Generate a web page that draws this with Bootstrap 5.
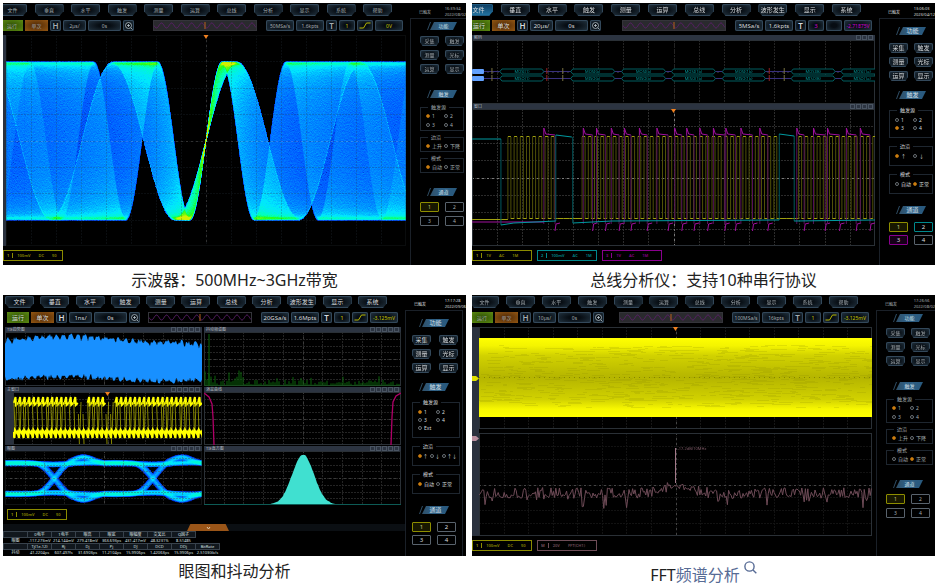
<!DOCTYPE html>
<html lang="zh-CN">
<head>
<meta charset="utf-8">
<meta name="viewport" content="width=device-width, initial-scale=1">
<title>示波器功能展示</title>
<link href="https://cdn.jsdelivr.net/npm/bootstrap@5.3.0/dist/css/bootstrap.min.css" rel="stylesheet">
<style>
body{font-family:"Noto Sans","Noto Sans CJK SC",sans-serif;background:#fff;color:#222}
.gallery{display:grid;grid-template-columns:1fr 1fr;column-gap:6px;padding:3px 2px 0 3px}
.gallery figure{min-width:0}
.gallery figcaption{font-size:16px;line-height:30px;text-align:center;color:#222}
.gallery figcaption a{color:#576b95;text-decoration:none}
.late{padding-top:4px}
.late svg{margin-bottom:18px}
.scope{background:#000;color:#a5adb2;font-size:5px;line-height:6px;height:262px;overflow:hidden;font-family:"Noto Sans","Noto Sans CJK SC",sans-serif}
.lower{height:261px}
.vivid{color:#d8dcdf;font-size:6px}
.scope button{font:inherit;color:inherit;border:0;padding:0;white-space:nowrap;overflow:hidden;flex:none;line-height:8px}
.deck{padding-top:1px;gap:4px}
.menus{height:12px;margin-right:18px;margin-left:var(--menu)}
.key{background:radial-gradient(ellipse at center,#070d13 25%,#1d2c38 80%);box-shadow:inset 0 0 0 1px #33485a;border-radius:2px}
.menus .key{width:29px;clip-path:polygon(0 0,100% 0,100% 60%,86% 100%,14% 100%,0 60%)}
.menus .key.on{background:linear-gradient(#0d3a5e,#2477a5);box-shadow:inset 0 0 0 1px #1f5a80}
.tools{height:11px;gap:2px;margin-left:var(--bar);margin-right:7px}
.tools .go{width:22px;background:radial-gradient(#2c4d05,#5d8c12)}
.tools .one{width:23px;background:radial-gradient(#4a2605,#945713)}
.tools .w1{width:11px}.tools .w2{width:23px}.tools .w3{width:33px}.tools .w4{width:28px}.tools .w5{width:16px}
.tools .hl{font-size:8px;font-weight:600}
.tools .lvl{font-size:5px}
.tools .key svg,.wavebox svg{display:block;width:100%;height:100%}
.wavebox{width:104px;margin:0 7px 0 auto;background:#2a2a2e;border:1px solid #34343a}
.framed .wavebox{background:#000}
.yel{color:#c8c800!important}.mag{color:#d000d0!important}
.strip{background:#2a313e;flex:none}
.plot{position:relative;overflow:hidden;background:#000;min-width:0}
.plot canvas,.plot>svg{position:absolute;left:0;top:0;width:100%;height:100%}
.bartitle{height:5px;background:#2c3441;font-size:4px;line-height:5px;padding:0 2px;color:#b5bac0}
.bartitle i{display:inline-block;width:5px;height:5px;border:1px solid #4a5563;margin-left:1px}
.tags{gap:5px;height:11px}
.tag{height:11px;line-height:9px;border:1px solid;min-width:60px;white-space:nowrap;font-size:4px}
.tag b{padding:0 3px;border-right:1px solid}
.tag span{padding:0 4px;font-weight:600}
.c1{color:#8b8b00}.c2{color:#00898d}.c3{color:#8a008e}.c4{color:#6f4d58}
.panelcol{width:56px;flex:none}
.framed .panelcol{width:61px}
[data-scope="fft"] .panelcol{width:59px}
.state{height:15px;font-size:4px;line-height:6px;padding:3px 0 0 9px;white-space:nowrap}
.side{border-left:1px solid #1a2028;border-top:1px solid #1a2028;flex:1;padding:3px 2px 0 9px}
.framed .side{padding-left:6px;margin-right:3px;border-right:1px solid #1a2028}
[data-scope="eye"] .pairs{column-gap:8px}
.chip{width:30px;height:8px;margin:0 auto 6px 7px;padding-left:3px;text-align:center;line-height:8px;color:#d5e0e8;background:linear-gradient(90deg,#2f4b60,#2f5f84 45%,#28587c);clip-path:polygon(0 100%,3px 0,4px 0,1px 100%,3px 100%,7px 0,100% 0,26px 100%)}
.pairs{display:grid;grid-template-columns:19px 19px;gap:4px 6px}
.pairs button{height:10px}
.pairs .key{clip-path:polygon(0 0,100% 0,100% 60%,86% 100%,14% 100%,0 60%)}
.g1{margin-bottom:16px}
.side fieldset{border:1px solid #1e262f;padding:1px 0 1px 5px;margin:0 0 3px}
.side legend{float:none;width:auto;font-size:5px;line-height:6px;padding:0 3px;margin:0 0 0 2px}
.opts{display:grid;grid-template-columns:18px 18px;grid-auto-rows:9px}
.opts.three{grid-template-columns:12px 12px 14px}
.opts label{display:flex;align-items:center;gap:2px;font-size:5px;white-space:nowrap}
.opts.three label{gap:1px}
.opts input{appearance:none;width:4px;height:4px;border:1px solid #6a7075;border-radius:50%;margin:0;flex:none}
.opts input:checked{background:#e08a10;border-color:#a3640c}
.fs3{margin-bottom:15px!important}
.chan button{background:#000;border:1px solid #59636d;border-radius:1px}
.chan .k1{border-color:#8e8e00;color:#c8c880;background:#181800}
.chan .k2{border-color:#00898d}.chan .k3{border-color:#8a008e;background:#160018}
.vivid .side{padding-top:8px}
.vivid .chip{margin-bottom:8px}
.vivid .g1{margin-bottom:10px}
.vivid fieldset{padding:3px 0 5px 5px;margin-bottom:5px}
.vivid .opts{grid-auto-rows:8px}
.vivid .chan{gap:3px 6px}
.vivid .fs3{margin-bottom:12px!important}
.fold{height:7px;background:#0b0f13}
.fold button{width:42px;height:7px;margin-left:184px;display:block;background:#9a5518;clip-path:polygon(8% 0,92% 0,100% 100%,0 100%)}
.fold svg{display:block;margin:auto}
.results{border-collapse:collapse;font-size:4px;line-height:5px;table-layout:fixed;color:#dfe2e4}
.results th,.results td{width:24px;height:6px;padding:0;text-align:center;font-weight:400;white-space:nowrap}
.results thead th,.results .hd th{background:#11171d;border:1px solid #38424c}
</style>
<script src="https://cdn.jsdelivr.net/npm/bootstrap@5.3.0/dist/js/bootstrap.bundle.min.js"></script>
</head>
<body>
<main class="gallery">
  <figure class="m-0">
    <div class="scope d-flex" data-scope="sweep"></div>
    <figcaption>示波器：500MHz~3GHz带宽</figcaption>
  </figure>
  <figure class="m-0">
    <div class="scope vivid d-flex" data-scope="bus"></div>
    <figcaption>总线分析仪：支持10种串行协议</figcaption>
  </figure>
  <figure class="m-0">
    <div class="scope vivid lower framed d-flex" data-scope="eye"></div>
    <figcaption>眼图和抖动分析</figcaption>
  </figure>
  <figure class="m-0">
    <div class="scope lower d-flex" data-scope="fft"></div>
    <figcaption class="late">FFT<a href="#fft">频谱分析<svg class="ms-1" width="13" height="13" viewBox="0 0 13 13" fill="none" stroke="#576b95" stroke-width="1.4" aria-hidden="true"><circle cx="5.5" cy="5.5" r="4.6"/><path d="M9 9l3.300 3.300"/></svg></a></figcaption>
  </figure>
</main>
<script>
const plot = (name, h) => `<div class="plot flex-fill" data-plot="${name}" style="height:${h}px"></div>`;
const title = (t, n) => `<div class="bartitle d-flex align-items-center"><span class="me-auto">${t}</span>${'<i></i>'.repeat(n)}</div>`;
const tag = (c, n, t) => `<div class="tag ${c}"><b>${n}</b>${t.map(s => `<span>${s}</span>`).join('')}</div>`;
const menuA = ['文件','垂直','水平','触发','测量','运算','总线','分析','显示','系统','帮助'];
const menuB = ['文件','垂直','水平','触发','测量','运算','总线','分析','波形发生','显示','系统'];
const slope = '<svg viewBox="0 0 15 11" fill="none" stroke="#b5b500"><path d="M2 8h4l3-5h4"/></svg>';
const lens = '<svg viewBox="0 0 11 11" fill="none" stroke="#b8c4cc" stroke-width=".8"><circle cx="5.5" cy="5.5" r="3"/><path d="M4 5.500h3M5.500 4v3M8 8l1.500 1.500"/></svg>';

const tableHtml = `<div class="fold"><button aria-label="收起"><svg width="5" height="4" viewBox="0 0 5 4" fill="none" stroke="#e0c8a8"><path d="M1 1l1.500 2L4 1"/></svg></button></div>
<table class="results"><thead><tr><th></th><th>0电平</th><th>1电平</th><th>眼高</th><th>眼宽</th><th>眼幅度</th><th>交叉比</th><th>Q因子</th></tr></thead>
<tbody><tr><th>眼图</th><td>-117.273mV</td><td>214.144mV</td><td>279.418mV</td><td>363.693ps</td><td>431.417mV</td><td>48.3231%</td><td>8.51485</td></tr>
<tr class="hd"><th></th><th>Tj(1e-12)</th><th>Rj</th><th>Dj</th><th>Pj</th><th>DJ</th><th>DCD</th><th>DDj</th><th>BitRate</th></tr>
<tr><th>抖动</th><td>41.2204ps</td><td>607.497fs</td><td>31.6903ps</td><td>11.2104ps</td><td>15.9906ps</td><td>1.42063ps</td><td>15.9906ps</td><td>2.5103Gb/s</td></tr></tbody></table>`;

const scopes = {
  sweep:{menu:menuA,m:-5,b:-2,base:'2µs/',rate:'50MSa/s',pts:'1.6kpts',ch:'1',lvl:'0V',time:'16:39:34',date:'2022/08/02',
    src:['1','2','3','4'],edge:['上升','下降'],mode:0,sel:0,
    body:`<div class="d-flex me-1"><div class="strip" style="width:3px"></div>${plot('sweep',211)}</div><div class="tags d-flex">${tag('c1','1',['100mV','DC','50'])}</div>`},
  bus:{menu:menuB,m:-8,b:-4,on:1,base:'20µs/',rate:'5MSa/s',pts:'1.6kpts',ch:'3',lvl:'-2.71875V',mag:1,time:'13:06:03',date:'2023/04/12',
    src:['1','2','3','4'],edge:['↑','↓'],mode:1,sel:2,
    body:`<div class="me-1">${title('解码',3)}${plot('decode',64)}${title('窗口',4)}${plot('lines',137)}</div><div class="tags d-flex">${tag('c1','1',['1V','AC','1M'])}${tag('c2','2',['100mV','AC','1M'])}${tag('c3','3',['1V','AC','1M'])}</div>`},
  eye:{menu:menuB,m:2,b:4,base:'1ns/',rate:'20GSa/s',pts:'1.6Mpts',ch:'1',lvl:'-3.125mV',time:'17:17:28',date:'2022/09/06',
    src:['1','2','3','4','Ext'],edge:['↑','↓','↑↓'],mode:0,sel:0,
    body:`<div class="me-1" style="display:grid;grid-template-columns:1fr 1fr;gap:1px 2px;padding-left:2px">
      <div>${title('TIE趋势图',5)}${plot('trend',54)}</div><div>${title('抖动频谱图',5)}${plot('spec',54)}</div>
      <div>${title('主窗口',5)}<div class="d-flex"><div class="strip" style="width:8px"></div>${plot('nrz',53)}</div></div><div>${title('浴盆曲线',5)}${plot('tub',53)}</div>
      <div>${title('眼图',5)}${plot('eye',54)}</div><div>${title('TIE直方图',5)}${plot('hist',54)}</div></div>
      <div class="tags d-flex ps-1">${tag('c1','1',['100mV','DC','50'])}</div><div>${tableHtml}</div>`},
  fft:{menu:menuA,m:-2,b:-1,base:'10µs/',rate:'100MSa/s',pts:'16kpts',ch:'1',lvl:'-3.125mV',time:'17:26:56',date:'2022/08/02',
    src:['1','2','3','4'],edge:['上升','下降'],mode:1,sel:0,
    body:`<div class="d-flex me-1"><div class="strip" style="width:7px"><div data-plot="ends" style="height:209px"></div></div><div class="flex-fill">${plot('band',102)}<div style="height:4px"></div>${plot('fft',103)}</div></div><div class="tags d-flex">${tag('c1','1',['100mV','DC','50'])}${tag('c4','M',['20V','FFT(CH1)'])}</div>`}
};
const radios = (id, name, list, sel, three) => `<div class="opts ${three?'three':''}">${list.map((t,i)=>`<label for="${id}${name}${i}"><input type="radio" name="${id}${name}" id="${id}${name}${i}" ${i===sel?'checked':''}>${t}</label>`).join('')}</div>`;

document.querySelectorAll('[data-scope]').forEach(el => {
  const id = el.dataset.scope, s = scopes[id], c = s.mag ? 'mag' : 'yel';
  el.innerHTML = `<div class="deck d-flex flex-column flex-fill overflow-hidden" style="--menu:${s.m}px;--bar:${s.b}px">
    <div class="menus d-flex justify-content-between">${s.menu.map((t,i)=>`<button class="key ${s.on&&!i?'on':''}">${t}</button>`).join('')}</div>
    <div class="tools d-flex"><button class="go">运行</button><button class="one">单次</button><button class="key w1 hl">H</button><button class="key w2">${s.base}</button><button class="key w3">0s</button><button class="key w1" aria-label="缩放">${lens}</button>
      <div class="wavebox" data-plot="mini"></div>
      <button class="key w4">${s.rate}</button><button class="key w4">${s.pts}</button><button class="key w1 hl">T</button><button class="key w5 ${c}">${s.ch}</button><button class="key w5" aria-label="触发边沿">${s.mag?'':slope}</button><button class="key w4 lvl ${c}">${s.lvl}</button></div>
    ${s.body}</div>
  <div class="panelcol d-flex flex-column"><div class="state d-flex justify-content-between"><span class="pt-1">已触发</span><span>${s.time}<br>${s.date}</span></div>
    <div class="side"><div class="chip">功能</div>
      <div class="pairs g1">${['采集','触发','测量','光标','运算','显示'].map(t=>`<button class="key">${t}</button>`).join('')}</div>
      <div class="chip">触发</div>
      <fieldset><legend>触发源</legend>${radios(id,'src',s.src,s.sel)}</fieldset>
      <fieldset><legend>边沿</legend>${radios(id,'edge',s.edge,0,s.edge.length>2)}</fieldset>
      <fieldset class="fs3"><legend>模式</legend>${radios(id,'mode',['自动','正常'],s.mode)}</fieldset>
      <div class="chip">通道</div>
      <div class="pairs chan">${[1,2,3,4].map(n=>`<button class="${n===1||s.mag&&n<4?'k'+n:''}">${n}</button>`).join('')}</div>
    </div></div>`;
});

let seed = 7;
const rnd = () => (seed = (seed * 16807) % 2147483647) / 2147483647;
const path = (pts, stroke, w = 1, extra = '') => `<path d="M${pts.map(p=>p[0].toFixed(1)+' '+p[1].toFixed(1)).join('L')}" fill="none" stroke="${stroke}" stroke-width="${w}" ${extra}/>`;
const text = (x, y, t, fill, size = 5, anchor = 'middle') => `<text x="${x}" y="${y}" fill="${fill}" font-size="${size}" text-anchor="${anchor}">${t}</text>`;
function grid(W, H, nx, ny, col, axis = '#3a3a3a') {
  let d = '';
  for (let i = 1; i < nx; i++) d += `M${Math.round(W*i/nx)+.5} 0V${H}`;
  for (let i = 1; i < ny; i++) d += `M0 ${Math.round(H*i/ny)+.5}H${W}`;
  const m = `M${Math.round(W/2)+.5} 0V${H}M0 ${Math.round(H/2)+.5}H${W}`;
  return `<path d="${d}" stroke="${col}" stroke-dasharray="2 1" fill="none"/><path d="${m}" stroke="${axis}" stroke-dasharray="2 3" fill="none"/><rect x=".5" y=".5" width="${W-1}" height="${H-1}" fill="none" stroke="#2a3036"/>`;
}
const marker = x => `<path d="M${x-2.5} 0h5l-2.500 4z" fill="#f08020"/>`;
// Colour ramp of the persistence display, keyed by relative hit density.
const ramp = [[0,0,0,0],[.1,0,40,190],[.35,0,85,255],[.7,0,125,255],[1.3,0,175,255],[2.2,0,230,255],[4.5,0,255,190],[8,30,255,30],[16,210,240,0]];
function heat(host, W, H, hits, mean) {
  const cv = document.createElement('canvas'); cv.width = W; cv.height = H;
  const ctx = cv.getContext('2d'), im = ctx.createImageData(W, H);
  for (let i = 0; i < W*H; i++) {
    const v = hits[i] / mean * (0.93 + rnd()*.14); let k = 1;
    while (k < ramp.length-1 && ramp[k][0] < v) k++;
    const a = ramp[k-1], b = ramp[k], t = Math.min(1, (v-a[0])/(b[0]-a[0]));
    for (let c = 0; c < 3; c++) im.data[i*4+c] = a[c+1] + (b[c+1]-a[c+1])*t;
    im.data[i*4+3] = 255;
  }
  ctx.putImageData(im, 0, 0); host.prepend(cv);
}
const draw = {
  mini(W,H){ const p=[]; for(let x=0;x<=W;x+=.5) p.push([x,H/2+Math.sin(x/1.6)*2.5]); return path(p,'#5b2069',1)+`<path d="M${W/2} 1V${H-1}" stroke="#b5601b"/>`; },
  ends(W,H){ return `<path d="M0 49h4l3 2.500-3 2.500H0z" fill="#e0e000"/><path d="M0 109h4l3 2.500-3 2.500H0z" fill="#b98fa0"/>`; },
  sweep(W,H,host){
    const hits=new Float32Array(W*H), c=W/2, A=78, N=600, u=W/400;
    for(let n=0;n<=N;n++){ const f=1/62+(1/32-1/62)*n/N, w=(n===0?8:1);
      for(let x=0;x<W;x+=.1){ const y=Math.round(H/2-A*Math.sin(Math.PI*f*(x-c)/u)+(rnd()-.5)*2.5); hits[y*W+(x|0)]+=w; } }
    heat(host,W,H,hits,38);
    return `<g opacity=".25">${grid(W,H,16,8,'#2a3540','#c0c0c0')}</g>`+marker(c);
  },
  decode(W,H){
    let s=grid(W,H,16,1,'#242424','#242424'); const k=W/404;
    const pk=[[28,72,'(1)'],[99,143,'(b)'],[150,194,'(b)'],[200,244,'(1b)'],[251,294,'(1b)'],[320,364,'(B)'],[370,412,'(1a)']];
    [[31,'MOSI'],[38,'MISO']].forEach(([y,n])=>{
      s+=`<path d="M0 ${y+.5}H${W}" stroke="#38307c"/><rect y="${y-2}" width="${12*k}" height="5" rx="1" fill="#62a1ff"/>`;
      pk.forEach(([a,b,t])=>{ a*=k;b*=k; s+=`<path d="M${a} ${y+.5}l2 -2.500H${b-2}l2 2.500l-2 2.500H${a+2}z" fill="#000" stroke="#005f60"/>`+text(Math.min((a+b)/2,W-10),y+2,n+t,'#009a9b',4); });
      [[75,'#932020'],[298,'#932020'],[20,'#777140'],[91,'#777140'],[313,'#777140']].forEach(([x,c])=>s+=`<path d="M${x*k} ${y-3}v6" stroke="${c}"/>`);
    });
    return s;
  },
  lines(W,H){
    const k=W/404; let s=grid(W,H,16,8,'#2c2c2c','#7a7a7a'),v='',lo='',m=[[0,113],[70*k,113]];
    for(let x=36;x<404;x+=6.2){ const off=(x>82&&x<106)||(x>307&&x<322);
      if(off){lo+=`M${x*k} 109.500h${6.2*k}`;continue;}
      v+=`M${(x*k).toFixed(1)} 110V28M${((x+3)*k).toFixed(1)} 110V28`; lo+=`M${x*k} 27.500h${3*k}M${(x+3)*k} 109.500h${3.2*k}`; }
    s+=`<path d="M0 110.500H${36*k}" stroke="#a0a010"/><path d="${v}" stroke="#505008"/><path d="${lo}" stroke="#a0a010"/>`;
    let mv='';
    for(let x=72;x<400;x+=11+rnd()*10){ if((x>80&&x<98)||(x>300&&x<318))continue; const e=x+6+rnd()*6;
      mv+=`M${x*k} 115V26M${e*k} 26V115`; m.push([x*k,114]); s+=path([[x*k,27],[x*k,19],[(x+2)*k,25],[e*k,26]],'#a0109e')+path([[e*k,122],[(e+1)*k,115],[(e+5)*k,114]],'#a0109e'); }
    s+=`<path d="${mv}" stroke="#55105a"/>`+path([[0,113],[72*k,113]],'#a0109e');
    s+=`<path d="M${29*k} 30V116M${84*k} 112V26M${101*k} 28V114M${308*k} 111V25M${323*k} 27V112" stroke="#00595e"/>`;
    s+=path([[0,30],[29*k,30]],'#009aa0')+path([[29*k,116],[42*k,114],[84*k,112]],'#009aa0')+path([[84*k,26],[100*k,28]],'#009aa0')+path([[101*k,114],[140*k,112],[308*k,111]],'#009aa0')+path([[308*k,25],[323*k,27]],'#009aa0')+path([[323*k,112],[W,111]],'#009aa0');
    return s+marker(W/2);
  },
  trend(W,H){
    const t=[],b=[]; for(let x=0;x<=W;x+=1){ const w=Math.sin(x/W*6.3+2.8)*3; t.push([x,8+w-4*Math.abs(Math.sin(x/2.2))+rnd()*4+(x>W*.88?(x-W*.88)/5:0)]); b.unshift([x,45+w*.8+Math.abs(Math.sin(x/2.1))*3+rnd()*4-2]); }
    return grid(W,H,10,8,'#242424')+`<path d="M${t.concat(b).map(p=>p.map(v=>v.toFixed(1)).join(' ')).join('L')}Z" fill="#1890ff"/>`;
  },
  spec(W,H){ let d=''; for(let x=1;x<W;x+=2) d+=`M${x} ${H}v${-(1+rnd()*5+(rnd()>.85?5:0)+(x<38&&rnd()>.7?10:0))}`; d+=`M5 ${H}V2`; return grid(W,H,10,8,'#242424')+`<path d="${d}" stroke="#0b650b"/>`; },
  nrz(W,H){
    let s=grid(W,H,10,8,'#242424'), d='', p=[];
    for(let x=1;x<W;x+=4.6){ const gap=Math.abs(x-W*.35)<4||Math.abs(x-W*.5)<4;
      if(!gap) p.push([x,11],[x+1.5,5],[x+2,13],[x+4,11]); else {s+=path(p,'#ffff00',2);p=[];}
      d+=`M${x} ${gap?22:10}l1 30`; if(rnd()>.5) d+=`M${x+2.6} 10l-1 30`; }
    s+=path(p,'#ffff00',2)+`<path d="${d}" stroke="#a8a800" opacity=".8"/>`; p=[];
    for(let x=0;x<W;x+=4.6) p.push([x,40],[x+1.4,46],[x+2,38],[x+4,41]);
    return s+path(p,'#ffff00',2.2)+marker(W/2);
  },
  tub(W,H){ return grid(W,H,10,8,'#242424')+path([[0,1],[5,5],[8,12],[9,25],[10,H]],'#b00068',1.3)+path([[W,1],[W-5,4],[W-8,10],[W-9,25],[W-10,H]],'#b00068',1.3); },
  eye(W,H,host){
    const hits=new Float32Array(W*H), T=W/2, c=W*.25, N=900;
    for(let n=0;n<N;n++){ const bits=[0,0,0,0,0].map(()=>rnd()>.5?1:-1), j=(rnd()-.5)*5, v=(rnd()-.5)*4;
      for(let x=0;x<W;x+=.25){ let k=Math.floor((x-c-j)/T+.5)+1, d=x-c-j-(k-1)*T, a=bits[k], b=bits[k+1];
        const tr=Math.max(-1,Math.min(1,d/19)), sm=Math.sin(tr*Math.PI/2);
        let y=(a+b)/2+(b-a)/2*sm; if(a!==b) y+=b*.42*Math.exp(-Math.pow((d-29)/13,2)); else y-=b*.06*Math.cos(d/12);
        const yy=Math.round(27-y*15+v+(rnd()-.5)*1.5); if(yy>=0&&yy<H) hits[yy*W+(x|0)]++; } }
    heat(host,W,H,hits,120); return `<g opacity=".4">${grid(W,H,10,8,'#484848','#a0a0a0')}</g>`;
  },
  hist(W,H){ let p=`M${W*.33} ${H}`; for(let x=W*.33;x<=W*.68;x++){ const y=H-(H-4)*Math.exp(-Math.pow((x-W*.503)/(W*.078),2))-rnd()*.8; p+=`L${x.toFixed(1)} ${y.toFixed(1)}`; } return grid(W,H,10,8,'#242424')+`<path d="${p}L${W*.68} ${H}Z" fill="#40e0d0"/><path d="M0 ${H-.5}H${W}" stroke="#0d5b55"/>`; },
  band(W,H){
    let s=`<defs><linearGradient id="yb" x2="0" y2="1"><stop stop-color="#ff0"/><stop offset=".1" stop-color="#f4f400"/><stop offset=".22" stop-color="#d2d200"/><stop offset=".5" stop-color="#b5b500"/><stop offset=".78" stop-color="#d2d200"/><stop offset=".9" stop-color="#f8f800"/><stop offset="1" stop-color="#ff0"/></linearGradient></defs>`+grid(W,H,16,8,'#161616','#444')+`<rect y="11" width="${W}" height="79" fill="url(#yb)"/>`, d='';
    for(let i=0;i<700;i++) d+=`M${(rnd()*W).toFixed(0)} ${(18+rnd()*62).toFixed(0)}.5h${(3+rnd()*12).toFixed(0)}`;
    return s+`<path d="${d}" stroke="#8f8f00" opacity=".2"/><path d="M0 ${H/2-.5}H${W}" stroke="#858500" stroke-dasharray="1 4"/>`+marker(W/2);
  },
  fft(W,H){
    const p=[],c=W/2; for(let x=0;x<=W;x+=1.2){ const near=Math.exp(-Math.pow((x-c)/20,2)); p.push([x,60-near*8+(rnd()-.5)*11*(1-near*.4)+(rnd()>.88?rnd()*13*(1-near):0)]); }
    return grid(W,H,16,8,'#121212','#444')+path(p,'#6e4b57',1)+`<path d="M${c} 50V15" stroke="#a37989"/>`+text(c+2,17,'-17.2dB/10MHz','#7d5966',4,'start');
  }
};
function paint(){
  seed = 7;
  document.querySelectorAll('[data-plot]').forEach(h => { h.textContent=''; const W=h.clientWidth,H=h.clientHeight; const s=draw[h.dataset.plot](W,H,h); h.insertAdjacentHTML('beforeend',`<svg class="d-block" viewBox="0 0 ${W} ${H}" aria-hidden="true">${s}</svg>`); });
}
paint();
addEventListener('resize', paint);
</script>
</body>
</html>
